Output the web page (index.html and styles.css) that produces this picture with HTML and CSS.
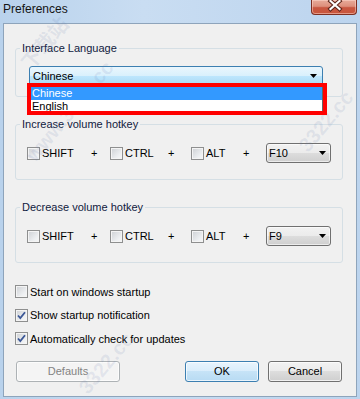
FILE: index.html
```html
<!DOCTYPE html>
<html>
<head>
  <title>Preferences</title>
  <link rel="stylesheet" href="styles.css">
</head>
<body>
  <div class="window">
    <div class="titlebar">
      <span class="title">Preferences</span>
      <div class="close">
        <svg width="46" height="15" viewBox="0 0 46 15">
          <path d="M19.5 2 L28.5 10 M28.5 2 L19.5 10" stroke="#5b241a" stroke-width="4.2" stroke-linecap="square"/>
          <path d="M19.5 2 L28.5 10 M28.5 2 L19.5 10" stroke="#fff" stroke-width="2.2" stroke-linecap="square"/>
        </svg>
      </div>
    </div>

    <div class="client">
      <fieldset class="group">
        <legend>Interface Language</legend>
        <div class="combo open">
          <span>Chinese</span>
          <svg class="arrow" width="7" height="4" viewBox="0 0 7 4"><polygon points="0,0 7,0 3.5,4" fill="#000"/></svg>
          <div class="droplist">
            <div class="item sel">Chinese</div>
            <div class="item">English</div>
          </div>
          <div class="mark"></div>
        </div>
      </fieldset>

      <fieldset class="group">
        <legend>Increase volume hotkey</legend>
        <div class="hotkey">
          <label class="check"><span class="box"></span>SHIFT</label>
          <span class="plus">+</span>
          <label class="check"><span class="box"></span>CTRL</label>
          <span class="plus">+</span>
          <label class="check"><span class="box"></span>ALT</label>
          <span class="plus">+</span>
          <div class="keysel">
            <span>F10</span>
            <svg class="arrow" width="7" height="4" viewBox="0 0 7 4"><polygon points="0,0 7,0 3.5,4" fill="#000"/></svg>
          </div>
        </div>
      </fieldset>

      <fieldset class="group">
        <legend>Decrease volume hotkey</legend>
        <div class="hotkey">
          <label class="check"><span class="box"></span>SHIFT</label>
          <span class="plus">+</span>
          <label class="check"><span class="box"></span>CTRL</label>
          <span class="plus">+</span>
          <label class="check"><span class="box"></span>ALT</label>
          <span class="plus">+</span>
          <div class="keysel">
            <span>F9</span>
            <svg class="arrow" width="7" height="4" viewBox="0 0 7 4"><polygon points="0,0 7,0 3.5,4" fill="#000"/></svg>
          </div>
        </div>
      </fieldset>

      <div class="options">
        <label class="check"><span class="box"></span>Start on windows startup</label>
        <label class="check"><span class="box"><svg width="11" height="11" viewBox="0 0 11 11"><path d="M2 5.5 L4.3 8 L9 2.2" fill="none" stroke="#3b5796" stroke-width="1.8"/></svg></span>Show startup notification</label>
        <label class="check"><span class="box"><svg width="11" height="11" viewBox="0 0 11 11"><path d="M2 5.5 L4.3 8 L9 2.2" fill="none" stroke="#3b5796" stroke-width="1.8"/></svg></span>Automatically check for updates</label>
      </div>

      <div class="buttons">
        <button class="btn" disabled>Defaults</button>
        <button class="btn default">OK</button>
        <button class="btn">Cancel</button>
      </div>
    </div>

    <div class="watermark">
      <span class="wm wm1">www.3322.cc</span>
      <span class="wm wm2">下载站</span>
      <span class="wm wm3">3322.cc</span>
      <span class="wm wm4">3322.cc</span>
    </div>
  </div>
</body>
</html>
```

FILE: styles.css
```css
* { box-sizing: border-box; }
body {
  margin: 0;
  font-family: "Liberation Sans", Arial, sans-serif;
  font-size: 11px;
  color: #000;
}
.window {
  position: relative;
  width: 360px;
  height: 399px;
  overflow: hidden;
  background: linear-gradient(90deg, #b9d2ec, #c9ddf2 40%, #bcd4ee);
}
.titlebar {
  height: 23px;
  display: flex;
  justify-content: space-between;
  align-items: flex-start;
}
.title {
  font-size: 12px;
  line-height: 15px;
  padding: 2px 0 0 3px;
  color: #141414;
}
.close {
  width: 46px;
  height: 15px;
  margin-right: 3px;
  border: 1px solid #7d2f22;
  border-top: none;
  border-radius: 0 0 4px 4px;
  background: linear-gradient(#e8ab9a, #dd8f7c 45%, #c85640 55%, #c9563c);
  box-shadow: inset 0 0 0 1px rgba(255,220,210,0.5);
}
.close svg { display: block; margin: -1px 0 0 -1px; }

.client {
  height: 374px;
  margin: 0 3px;
  border: 1px solid #8ea4bb;
  background: #f0f0f0;
  padding-top: 18px;
}

.group {
  width: 328px;
  margin: 0 0 0 11px;
  padding: 11px 4px 10px 4px;
  border: 1px solid #d5dfe5;
  border-radius: 3px;
  min-width: 0;
}
.group + .group {
  margin-top: 21px;
  padding: 12px 4px 16px 4px;
}
.group legend {
  padding: 0 2px;
  line-height: 13px;
  color: #10203e;
}

.combo {
  position: relative;
  width: 294px;
  height: 20px;
  margin-left: 9px;
  padding: 0 5px 0 3px;
  display: flex;
  align-items: center;
  justify-content: space-between;
  border: 1px solid #3c7fb1;
  border-radius: 3px;
  background: linear-gradient(#eaf6fd, #d9f0fc 50%, #bee6fd 50%, #a9d9f4);
}
.combo span { margin-top: -1px; }
.arrow { display: block; }
.droplist {
  position: absolute;
  left: -1px;
  top: 19px;
  width: 294px;
  border: 1px solid #646464;
  background: #fff;
  z-index: 2;
}
.item {
  height: 13px;
  line-height: 13px;
  padding-left: 2px;
}
.item.sel { background: #3399ff; color: #fff; }
.mark {
  position: absolute;
  left: -3px;
  top: 16px;
  width: 300px;
  height: 32px;
  border: 4px solid #ff0000;
  z-index: 3;
}

.hotkey {
  margin-left: 7px;
  display: grid;
  grid-template-columns: 64px 19px 58px 23px 52px 23px 65px;
  align-items: center;
  height: 20px;
}
.plus { font-size: 11px; color: #000; }

.check {
  display: flex;
  align-items: center;
}
.box {
  width: 13px;
  height: 13px;
  margin-right: 2px;
  border: 1px solid #8e8f8f;
  background: linear-gradient(135deg, #cdd0d4, #eef0f2 70%, #f6f6f6);
  box-shadow: inset 0 0 0 1px #f4f4f4;
  flex: none;
}
.box svg { display: block; margin: 0; }

.keysel {
  height: 20px;
  display: flex;
  align-items: center;
  justify-content: space-between;
  padding: 0 4px 0 2px;
  border: 1px solid #707070;
  border-radius: 3px;
  background: linear-gradient(#f2f2f2, #ebebeb 50%, #dddddd 50%, #cfcfcf);
  box-shadow: inset 0 0 0 1px rgba(255,255,255,0.6);
}

.options {
  margin: 17px 0 0 11px;
}
.options .check {
  height: 23.5px;
}

.buttons {
  display: flex;
  margin-top: 10px;
  padding: 0 14px 0 12px;
}
.btn {
  height: 21px;
  width: 74px;
  font-family: "Liberation Sans", Arial, sans-serif;
  font-size: 11px;
  color: #000;
  border: 1px solid #707070;
  border-radius: 3px;
  background: linear-gradient(#f2f2f2, #ebebeb 50%, #dddddd 50%, #cfcfcf);
  box-shadow: inset 0 0 0 1px rgba(255,255,255,0.7);
  padding: 0;
}
.btn:disabled {
  width: 104px;
  color: #838383;
  border-color: #adb2b5;
  background: #f4f4f4;
}
.btn.default {
  margin-left: auto;
  margin-right: 9px;
  border-color: #3c7fb1;
  background: linear-gradient(#e8f4fd, #d9edfb 50%, #c6e3f7 50%, #b8dbf3);
}

.watermark {
  position: absolute;
  inset: 0;
  pointer-events: none;
}
.wm {
  position: absolute;
  font-family: "Liberation Sans", "Noto Sans CJK SC", sans-serif;
  font-weight: bold;
  font-size: 20px;
  color: rgba(100, 120, 175, 0.13);
  white-space: nowrap;
  transform: rotate(-50deg);
}
.wm1 { left: 8px; top: 100px; }
.wm2 { left: 14px; top: 28px; }
.wm3 { left: 70px; top: 352px; }
.wm4 { left: 290px; top: 110px; }
```
